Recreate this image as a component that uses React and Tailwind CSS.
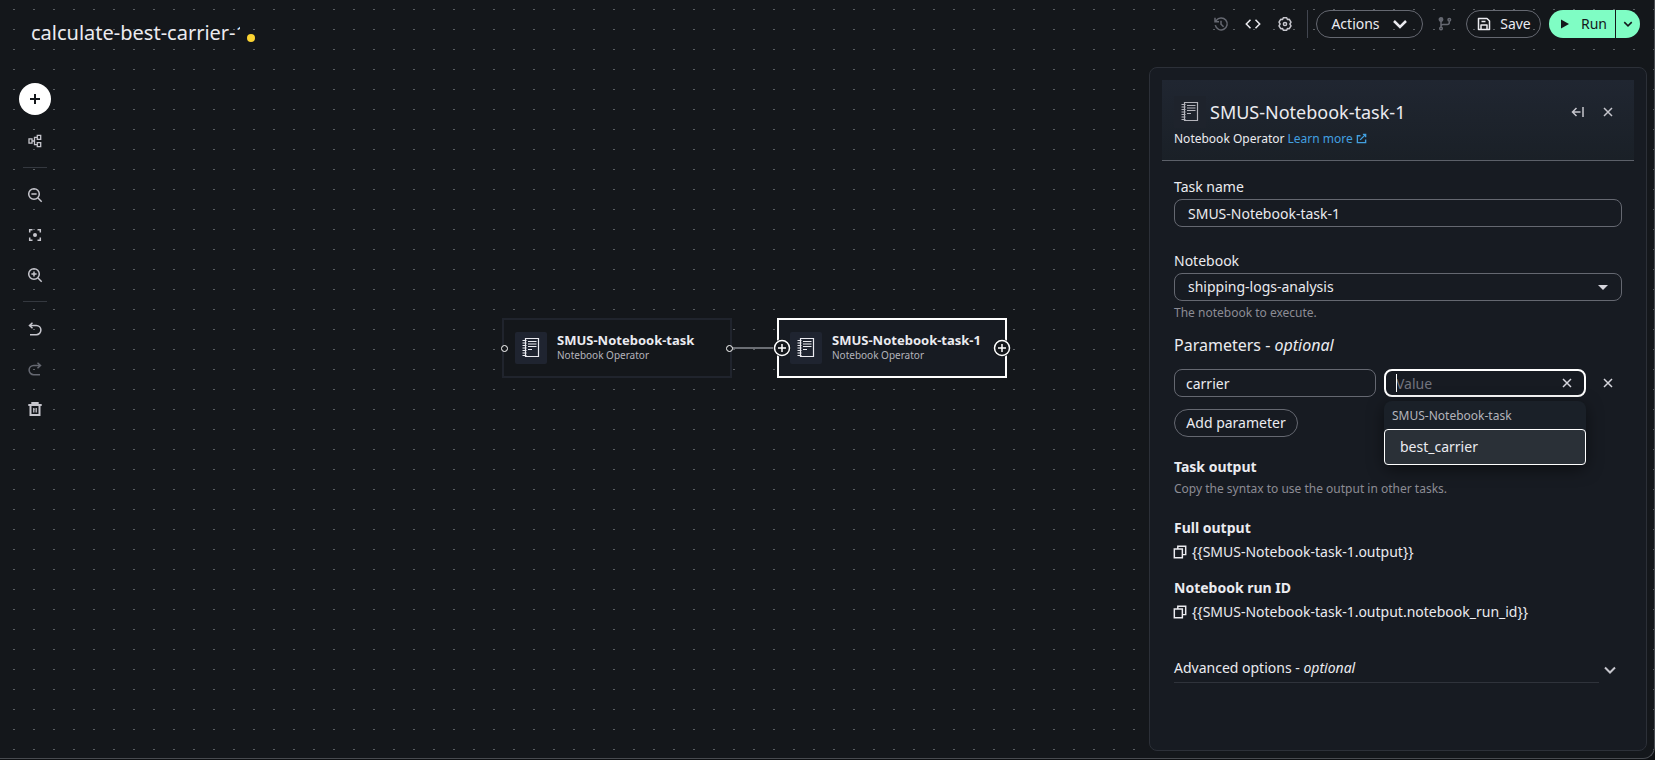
import { useState } from "react";

const tools = [
    { id: "layout", label: "Auto layout", icon: <LayoutIcon /> },
    { id: "sep-1" },
    { id: "zoom-out", label: "Zoom out", icon: <ZoomIcon /> },
    { id: "fit", label: "Fit view", icon: <FitIcon /> },
    { id: "zoom-in", label: "Zoom in", icon: <ZoomIcon plus /> },
    { id: "sep-2" },
    { id: "undo", label: "Undo", icon: <UndoIcon /> },
    { id: "redo", label: "Redo", icon: <RedoIcon />, disabled: true },
    { id: "delete", label: "Delete", icon: <TrashIcon /> },
];

const outputs = [
    { title: "Full output", value: "{{SMUS-Notebook-task-1.output}}" },
    { title: "Notebook run ID", value: "{{SMUS-Notebook-task-1.output.notebook_run_id}}" },
];

export default function App() {
    return (
        <div className="h-screen bg-[#0e1013] pb-px font-['Noto_Sans',sans-serif] text-[#ebebf0]">
            <div className="flex h-full flex-col overflow-hidden rounded-br-xl border-r border-b border-[#484b50] bg-[#14171b] bg-[conic-gradient(at_2px_1px,transparent_75%,#5a5e63_0)] bg-[size:20px_20px] bg-[position:13px_9px]">
                <Header />
                <div className="flex min-h-0 flex-1">
                    <Toolbar />
                    <Canvas />
                    <TaskPanel />
                </div>
            </div>
        </div>
    );
}

/* ========== HEADER ========== */
function Header() {
    const [name, setName] = useState("calculate-best-carrier-1");

    return (
        <header className="flex h-[67px] shrink-0 justify-between pr-[14px] pl-[31px]">
            <div className="flex h-[66px] items-center gap-[7px]">
                <input
                    aria-label="Workflow name"
                    value={name}
                    onChange={(e) => setName(e.target.value)}
                    className="w-[209px] bg-transparent text-xl leading-7 outline-none"
                />
                <span className="mt-[10px] size-2 rounded-full bg-[#fbd332]" />
            </div>

            <div className="mt-[10px] flex h-7 items-center">
                <button aria-label="Run history" className="p-2 text-[#656871]"><HistoryIcon /></button>
                <button aria-label="View code" className="p-2"><CodeIcon /></button>
                <button aria-label="Settings" className="p-2 text-[#c6c6cd]"><GearIcon /></button>
                <span className="mr-2 ml-[6px] h-7 w-px bg-[#424650]" />
                <button className="flex h-7 w-[107px] items-center justify-center gap-3 rounded-full border border-[#656871] text-sm">
                    Actions
                    <svg viewBox="0 0 16 16" className="size-4" fill="none" stroke="currentColor" strokeWidth="2.5">
                        <path d="M2 5l6 6 6-6" />
                    </svg>
                </button>
                <button aria-label="Branches" className="ml-[6px] p-2 text-[#656871]"><BranchIcon /></button>
                <button className="mr-2 ml-[5px] flex h-7 w-[75px] items-center justify-center gap-2 rounded-full border border-[#656871] text-sm">
                    <SaveIcon />
                    Save
                </button>
                <div className="flex h-7 text-[#14171b]">
                    <button className="flex w-[66px] items-center justify-center gap-2 rounded-l-full bg-[#7ffdc4] text-sm">
                        <svg viewBox="0 0 16 16" className="size-4" fill="currentColor">
                            <path d="M4 3.5v9L12 8z" />
                        </svg>
                        Run
                    </button>
                    <button aria-label="More run options" className="ml-px flex w-6 items-center justify-center rounded-r-full bg-[#7ffdc4]">
                        <svg viewBox="0 0 16 16" className="size-3" fill="none" stroke="currentColor" strokeWidth="2">
                            <path d="M3 5.5l5 5 5-5" />
                        </svg>
                    </button>
                </div>
            </div>
        </header>
    );
}

/* ========== LEFT TOOLBAR ========== */
function Toolbar() {
    return (
        <nav className="flex w-[67px] shrink-0 flex-col items-start gap-2 pt-4 pl-[19px]">
            <button aria-label="Add task" className="mb-[2px] flex size-8 items-center justify-center rounded-full bg-white text-[#14171b]">
                <svg viewBox="0 0 16 16" className="size-4" fill="none" stroke="currentColor" strokeWidth="2">
                    <path d="M8 3v10M3 8h10" />
                </svg>
            </button>
            {tools.map((tool) =>
                tool.icon ? (
                    <button
                        key={tool.id}
                        aria-label={tool.label}
                        className={`flex size-8 items-center justify-center ${tool.disabled ? "text-[#656871]" : "text-[#c6c6cd]"}`}
                    >
                        {tool.icon}
                    </button>
                ) : (
                    <span key={tool.id} className="mt-[2px] mb-[3px] ml-1 h-px w-6 bg-[#34383f]" />
                )
            )}
        </nav>
    );
}

/* ========== CANVAS ========== */
function Canvas() {
    return (
        <main className="relative min-w-0 flex-1">
            <div className="absolute top-[280px] left-[664px] h-[2px] w-[46px] bg-[#6b6e74]" />

            <div className="absolute top-[251px] left-[435px]">
                <TaskNode title="SMUS-Notebook-task" />
                <span className="absolute top-[27px] -left-px size-[7px] rounded-full border border-white bg-[#14171b]" />
                <span className="absolute top-[27px] -right-px size-[7px] rounded-full border border-white bg-[#14171b]" />
            </div>

            <div className="absolute top-[251px] left-[710px]">
                <TaskNode title="SMUS-Notebook-task-1" selected />
                <PlusHandle className="absolute top-[21px] -left-[4px]" />
                <PlusHandle className="absolute top-[21px] -right-[4px]" />
            </div>
        </main>
    );
}

function TaskNode({ title, selected }) {
    return (
        <div
            className={`flex h-[60px] w-[230px] items-center gap-[10px] border-2 pl-[11px] ${
                selected ? "border-white bg-[#171b22]" : "border-[#20242d] bg-[#14171b]"
            }`}
        >
            <span className="flex size-8 items-center justify-center rounded-[2px] bg-[#1f2430]">
                <NotebookIcon />
            </span>
            <div className="pb-[2px]">
                <p className="text-[13px] leading-4 font-bold">{title}</p>
                <p className="text-[10px] leading-[14px] text-[#b4b4bb]">Notebook Operator</p>
            </div>
        </div>
    );
}

function PlusHandle({ className }) {
    return (
        <svg viewBox="0 0 18 18" className={`size-[18px] ${className}`} fill="none" stroke="white" strokeWidth="1.5">
            <circle cx="9" cy="9" r="9" fill="#14171b" stroke="none" />
            <circle cx="9" cy="9" r="7.5" />
            <path d="M9 5v8M5 9h8" />
        </svg>
    );
}

/* ========== TASK PANEL ========== */
function TaskPanel() {
    const [taskName, setTaskName] = useState("SMUS-Notebook-task-1");

    return (
        <aside className="mr-[7px] mb-[7px] w-[498px] shrink-0 rounded-lg border border-[#2c3038] bg-[#171b22] p-3">
            <div className="h-[81px] border-b border-[#5c6069] bg-linear-to-b from-[#202631] to-[#1a2027] px-3 pt-4">
                <div className="flex h-8 items-center">
                    <span className="mr-1 flex size-8 items-center justify-center bg-[#1e232c] text-[#b4b4bb]">
                        <NotebookIcon />
                    </span>
                    <h2 className="flex-1 text-lg leading-7">SMUS-Notebook-task-1</h2>
                    <button aria-label="Collapse panel" className="p-[7px] text-[#c6c6cd]">
                        <svg viewBox="0 0 16 16" className="size-4" fill="none" stroke="currentColor" strokeWidth="1.5">
                            <path d="M13 3v10M10.5 8H2.500M6.500 4l-4 4 4 4" />
                        </svg>
                    </button>
                    <button aria-label="Close panel" className="-mr-px p-[7px] text-[#c6c6cd]"><CloseIcon /></button>
                </div>
                <p className="mt-[2px] text-xs leading-[18px]">
                    Notebook Operator{" "}
                    <a href="#learn-more" className="text-[#42a0e0]">
                        Learn more{" "}
                        <svg viewBox="0 0 16 16" className="mb-[3px] inline size-[11px]" fill="none" stroke="currentColor" strokeWidth="2">
                            <path d="M10 2h4v4M6 10l8-8M14 9.5V14H2V4h4.5" />
                        </svg>
                    </a>
                </p>
            </div>

            <form className="px-3 pt-4 text-sm leading-5" onSubmit={(e) => e.preventDefault()}>
                <label htmlFor="task-name" className="block">Task name</label>
                <input
                    id="task-name"
                    value={taskName}
                    onChange={(e) => setTaskName(e.target.value)}
                    className="mt-[2px] block h-7 w-full rounded-lg border border-[#656871] bg-transparent px-[13px]"
                />

                <label htmlFor="notebook" className="mt-6 block">Notebook</label>
                <div className="relative mt-[2px]">
                    <select
                        id="notebook"
                        className="block h-7 w-full appearance-none rounded-lg border border-[#656871] bg-transparent px-[13px]"
                    >
                        <option>shipping-logs-analysis</option>
                    </select>
                    <svg viewBox="0 0 10 5" className="pointer-events-none absolute top-3 right-[14px] h-[5px] w-[10px]" fill="#d6d6dd">
                        <path d="M0 0h10L5 5z" />
                    </svg>
                </div>
                <p className="mt-[3px] text-xs leading-[18px] text-[#8c8c94]">The notebook to execute.</p>

                <h3 className="mt-[11px] text-base leading-6">
                    Parameters - <em>optional</em>
                </h3>

                <div className="mt-3 grid grid-cols-[minmax(0,1fr)_minmax(0,1fr)_auto] items-center gap-2">
                    <input
                        aria-label="Parameter name"
                        defaultValue="carrier"
                        className="h-7 w-full rounded-lg border border-[#656871] bg-transparent px-[11px]"
                    />
                    <div className="relative">
                        <input
                            aria-label="Parameter value"
                            placeholder="Value"
                            className="block h-7 w-full rounded-lg border-2 border-white bg-transparent px-[10px] placeholder:text-[#72747e]"
                        />
                        <span className="absolute top-[5px] left-3 h-[18px] w-px bg-white" />
                        <button type="button" aria-label="Clear value" className="absolute top-[6px] right-[11px] text-[#d6d6dd]">
                            <CloseIcon />
                        </button>
                        <Suggestions />
                    </div>
                    <button type="button" aria-label="Remove parameter" className="px-[6px] text-[#d6d6dd]">
                        <CloseIcon />
                    </button>
                </div>

                <button type="button" className="mt-3 h-7 w-[124px] rounded-full border border-[#656871]">
                    Add parameter
                </button>

                <h4 className="mt-5 font-bold">Task output</h4>
                <p className="mt-[3px] text-xs leading-[18px] text-[#8c8c94]">Copy the syntax to use the output in other tasks.</p>

                <div className="mt-5 flex flex-col gap-4">
                    {outputs.map((output) => (
                        <div key={output.title}>
                            <h4 className="font-bold">{output.title}</h4>
                            <p className="mt-1 flex items-center gap-[5px]">
                                <button type="button" aria-label={`Copy ${output.title}`}><CopyIcon /></button>
                                {output.value}
                            </p>
                        </div>
                    ))}
                </div>

                <button type="button" className="mt-9 flex w-full items-center text-left">
                    <span className="flex-1 border-b border-[#2f333b] pb-1">
                        Advanced options - <em>optional</em>
                    </span>
                    <svg viewBox="0 0 16 16" className="mr-1 mb-[2px] ml-[3px] size-4" fill="none" stroke="#c6c6cd" strokeWidth="2">
                        <path d="M3 5.5l5 5 5-5" />
                    </svg>
                </button>
            </form>
        </aside>
    );
}

function Suggestions() {
    return (
        <div className="absolute top-8 left-0 z-10 w-full rounded-lg bg-[#1a2028] shadow-[0_4px_16px_rgba(0,0,0,0.5)]">
            <p className="px-2 pt-[6px] pb-1 text-xs leading-[18px] text-[#b4b4bb]">SMUS-Notebook-task</p>
            <button type="button" className="block h-9 w-full rounded border border-white bg-[#2a3037] px-[15px] text-left">
                best_carrier
            </button>
        </div>
    );
}

/* ========== ICONS ========== */
function Icon({ children, width = "1.5", className = "size-4" }) {
    return (
        <svg viewBox="0 0 16 16" className={className} fill="none" stroke="currentColor" strokeWidth={width}>
            {children}
        </svg>
    );
}

function CloseIcon() {
    return (
        <Icon>
            <path d="M4 4l8 8M12 4l-8 8" />
        </Icon>
    );
}

function CopyIcon() {
    return (
        <Icon className="-ml-px block size-[14px]" width="1.7">
            <path d="M5.500 4.500V1.500h9v9.500h-3M1.500 4.700h9.200v10H1.500z" />
        </Icon>
    );
}

function HistoryIcon() {
    return (
        <Icon>
            <path d="M2.300 9.200A6 6 0 1 0 3.300 4.400L2.600 5.400M2 1.800v4h4M8 4.800v3.400l2.600 2.600" />
        </Icon>
    );
}

function CodeIcon() {
    return (
        <Icon>
            <path d="M5.500 3.800L1.300 8l4.200 4.200M10.500 3.800L14.700 8l-4.200 4.200" />
        </Icon>
    );
}

function GearIcon() {
    return (
        <Icon>
            <path d="M6.300 1.800h3.400l.7 1.700 1.900-.2 1.700 2.900L12.900 8l1.100 1.800-1.700 2.900-1.900-.2-.7 1.700H6.300l-.7-1.700-1.900.2L2 9.800 3.100 8 2 6.200l1.700-2.900 1.900.2z" strokeLinejoin="round" />
            <circle cx="8" cy="8" r="1.600" />
        </Icon>
    );
}

function BranchIcon() {
    return (
        <Icon>
            <circle cx="4" cy="3.5" r="1.7" fill="currentColor" />
            <circle cx="4" cy="12.5" r="1.3" />
            <circle cx="12.3" cy="3.8" r="1.3" />
            <path d="M4 5v6M12.300 5.200v1.300q0 2-2 2H6q-2 0-2 2" />
        </Icon>
    );
}

function SaveIcon() {
    return (
        <Icon>
            <path d="M2.500 2.500h8.500l2.500 2.500v8.500h-11zM5 13.500V9h6v4.500M5.500 5.500h4" strokeLinejoin="round" />
        </Icon>
    );
}

function LayoutIcon() {
    return (
        <Icon width="1.3">
            <path d="M2 5.800h3v4.400H2zM10.300 2.300h3.400v4h-3.400zM10.300 9.700h3.400v4h-3.400zM5 8h2.500M10 4.300H7.500v7.400H10" />
        </Icon>
    );
}

function ZoomIcon({ plus }) {
    return (
        <Icon>
            <circle cx="7" cy="7" r="5.3" />
            <path d="M11 11l3.700 3.700M4.400 7h5.200" />
            {plus && <path d="M7 4.400v5.200" />}
        </Icon>
    );
}

function FitIcon() {
    return (
        <Icon>
            <path d="M2.700 5.500V2.700h2.800M10.500 2.700h2.800v2.800M13.300 10.500v2.800h-2.800M5.500 13.300H2.700v-2.800" />
            <circle cx="8" cy="8" r="2" fill="currentColor" stroke="none" />
        </Icon>
    );
}

function UndoIcon() {
    return (
        <Icon>
            <path d="M5.500 1.800L2.500 4.500l3 2.800M2.500 4.500h6.800a4.600 4.600 0 0 1 0 9.200H3" />
        </Icon>
    );
}

function RedoIcon() {
    return (
        <Icon>
            <path d="M10.500 1.800l3 2.700-3 2.800M13.500 4.500H6.700a4.600 4.600 0 0 0 0 9.200H13" />
        </Icon>
    );
}

function TrashIcon() {
    return (
        <Icon width="2">
            <path d="M1.300 4h13.400M5.300 3.200V2h5.400v1.200M3.500 4.500v9.500h9V4.500" />
            <path d="M6.800 7v4.500M9.200 7v4.500" strokeWidth="1.3" />
        </Icon>
    );
}

function NotebookIcon() {
    return (
        <svg viewBox="0 0 20 22" className="h-[22px] w-5" fill="none" stroke="currentColor">
            <path d="M4.500 1.500h13v18h-13z" strokeWidth="1.2" />
            <path d="M1.500 3.500h4M1.500 6h4M1.500 8.500h4M1.500 11h4M1.500 13.500h4M1.500 16h4M1.500 18.500h4" strokeWidth="1.1" />
            <path d="M7 4.500h8.500M7 7h8.500M7 9.500h8.500M7 12.500h4" strokeWidth="1" />
        </svg>
    );
}
